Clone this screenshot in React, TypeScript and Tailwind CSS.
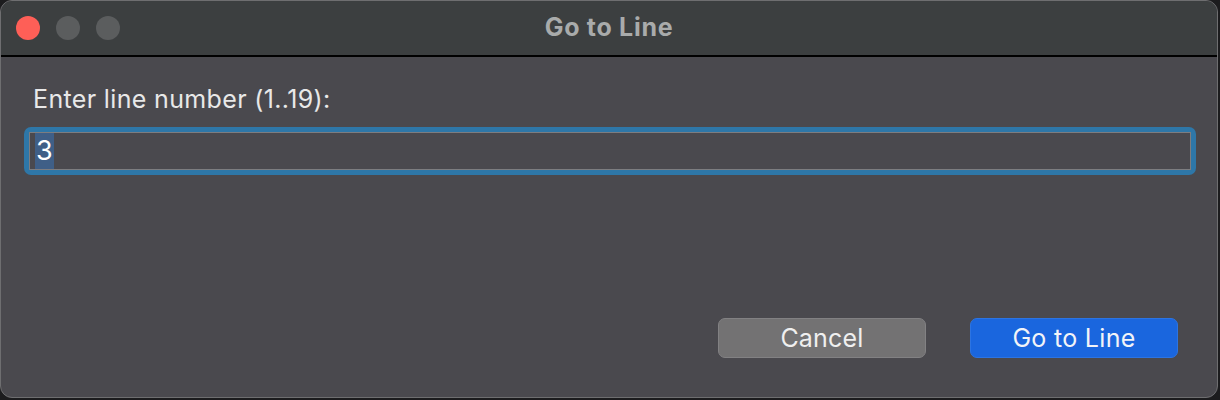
import React from 'react';

export default function App() {
    return (
        <div className="w-[1220px] h-[400px] bg-[#1c1c1e] overflow-hidden" style={{ fontFamily: 'Inter, "Liberation Sans", sans-serif' }}>
            <div className="w-[1218px] h-[398px] rounded-[12px] border border-[#6e6e70] bg-[#4a494e] overflow-hidden flex flex-col">
                {/* Title bar */}
                <div className="relative h-[56px] shrink-0 bg-[#3c3f40] border-b-2 border-black flex items-center justify-center">
                    <div className="absolute left-[15px] top-[15px] flex gap-[16px]">
                        <span className="w-[24px] h-[24px] rounded-full bg-[#fe5f57]" />
                        <span className="w-[24px] h-[24px] rounded-full bg-[#5b5d5e]" />
                        <span className="w-[24px] h-[24px] rounded-full bg-[#5b5d5e]" />
                    </div>
                    <span className="text-[25px] font-bold text-[#a9abab] tracking-[0.7px] -mt-[1px] leading-none">Go to Line</span>
                </div>

                {/* Body */}
                <div className="flex-1 flex flex-col px-[23px] pt-[27px]">
                    <p className="pl-[9px] text-[25px] tracking-[0.35px] text-[#e8e8e8] leading-[30px]">Enter line number (1..19):</p>
                    <div className="mt-[13px] w-[1172px] h-[48px] rounded-[7px] bg-[#2e77a8] p-[5px]">
                        <div className="h-full border border-[#7d7d80] bg-[#4a494e] flex items-center pl-[5px]">
                            <span className="bg-[#3f5f87] text-[27px] text-white leading-[36px] px-[1px]">3</span>
                        </div>
                    </div>

                    <div className="mt-auto mb-[39px] flex justify-end gap-[44px] pr-[16px]">
                        <button className="w-[208px] h-[40px] rounded-[7px] bg-[#737273] border border-[#828183] text-[25px] tracking-[0.2px] leading-none text-[#efefef]">
                            Cancel
                        </button>
                        <button className="w-[208px] h-[40px] rounded-[7px] bg-[#1a66de] border border-[#2c74e2] text-[25px] tracking-[0.3px] leading-none text-[#f2f4f8]">
                            Go to Line
                        </button>
                    </div>
                </div>
            </div>
        </div>
    );
}
